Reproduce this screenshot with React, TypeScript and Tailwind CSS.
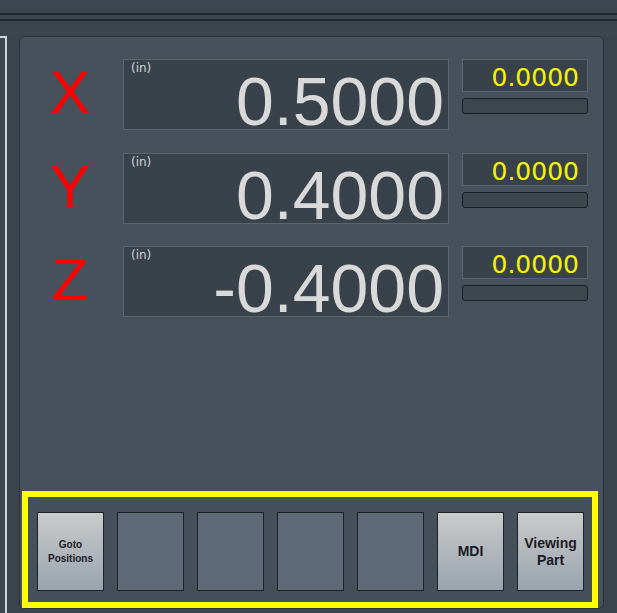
const axes = [
  { name: "X", value: "0.5000", mt: "mt-[22px]" },
  { name: "Y", value: "0.4000", mt: "mt-[23px]" },
  { name: "Z", value: "-0.4000", mt: "mt-[22px]" },
];

const buttons = [
  { label: ["Goto", "Positions"], small: true },
  { label: null },
  { label: null },
  { label: null },
  { label: null },
  { label: ["MDI"] },
  { label: ["Viewing", "Part"] },
];

function AxisRow({ name, value, mt }: { name: string; value: string; mt: string }) {
  return (
    <div className={`flex items-start ${mt}`}>
      <div className="w-[100px] mr-[3px] text-center text-[60px] leading-[67px] text-[#ff0000] font-['Liberation_Sans',Arial,sans-serif]">
        {name}
      </div>
      <div className="relative w-[326px] h-[71px] bg-[#39414a] border border-[#5c656e]">
        <span className="absolute left-[7px] top-[1px] text-[12px] leading-[15px] text-[#ccd3da] font-['DejaVu_Sans',sans-serif]">
          (in)
        </span>
        <div className="pt-[7px] pr-[4px] text-right text-[68px] leading-[68px] text-[#d9d9d9] font-['Liberation_Sans',Arial,sans-serif]">
          {value}
        </div>
      </div>
      <div className="ml-[13px] w-[126px] flex flex-col">
        <div className="h-[33px] bg-[#39414a] border border-[#5c656e] pt-[3px] pr-[8px] text-right text-[25px] leading-[29px] text-[#f5f500] font-['DejaVu_Sans',sans-serif]">
          0.0000
        </div>
        <div className="mt-[6px] h-[16px] rounded-[3px] bg-[#3d454d] border border-[#1b1f23]" />
      </div>
    </div>
  );
}

export default function App() {
  return (
    <div className="w-[617px] h-[613px] bg-[#3b444d] overflow-hidden flex flex-col">
      <div className="h-[13px] bg-[#3d4650]" />
      <div className="h-[2px] bg-[#21272d]" />
      <div className="h-[4px] bg-[#3f4851]" />
      <div className="h-[2px] bg-[#21272d]" />
      <div className="h-[15px] bg-[#3c454e]" />
      <div className="flex flex-1">
        <div className="w-[7px] h-full bg-[#3f4851] border-t-2 border-r-2 border-[#cfd3d7]" />
        <div className="ml-[12px] w-[585px] h-[573px] rounded-[6px] bg-[#47515b] border border-[#2b3238] flex flex-col">
          {axes.map((a) => (
            <AxisRow key={a.name} {...a} />
          ))}
          <div className="mt-auto ml-[2px] w-[576px] h-[117px] border-[6px] border-[#ffff00] bg-[#46505a] flex pl-[9px] pt-[15px] gap-[13px]">
            {buttons.map((b, i) =>
              b.label ? (
                <div
                  key={i}
                  className={`w-[67px] h-[79px] border border-[#1e2328] bg-gradient-to-b from-[#cacaca] to-[#99a4ae] flex flex-col items-center justify-center text-center font-bold text-[#1a1b26] font-['Liberation_Sans',Arial,sans-serif] ${
                    b.small ? "text-[10px] leading-[14px]" : "text-[14px] leading-[17px]"
                  }`}
                >
                  {b.label.map((l) => (
                    <span key={l}>{l}</span>
                  ))}
                </div>
              ) : (
                <div key={i} className="w-[67px] h-[79px] border border-[#1e2328] bg-[#5e6978]" />
              )
            )}
          </div>
        </div>
      </div>
    </div>
  );
}
